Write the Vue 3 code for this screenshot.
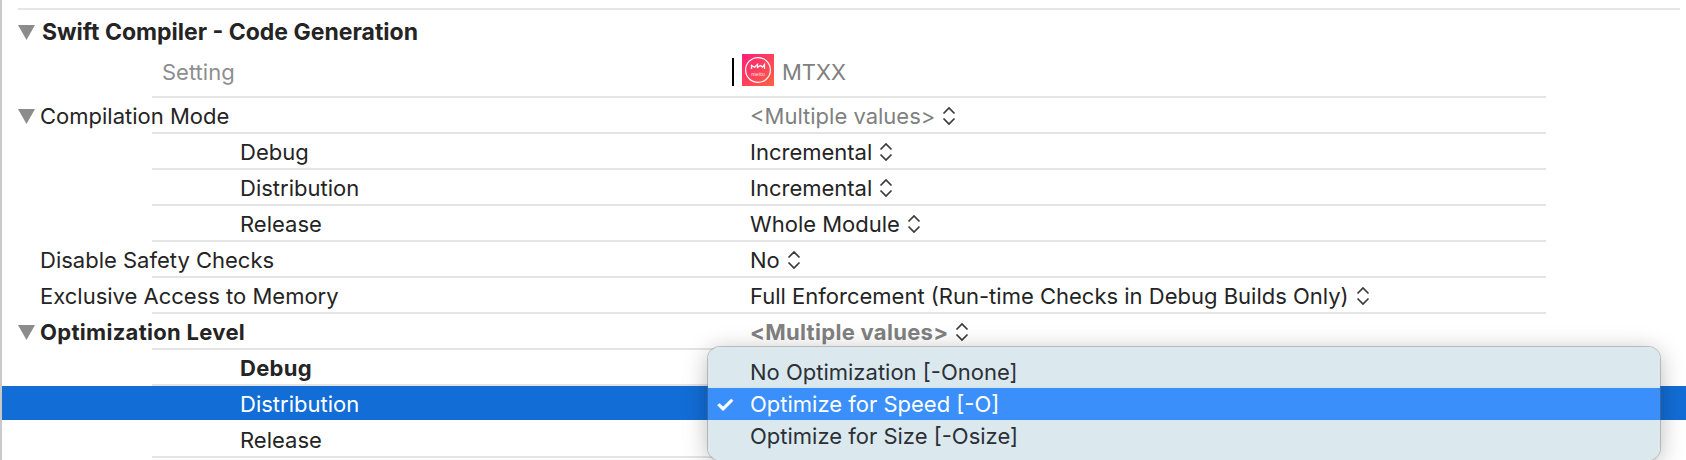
<script setup>
// Xcode build settings table: one section, a header row and the setting rows below it.
const rows = [
  { label: 'Compilation Mode', value: '<Multiple values>', level: 0, open: true, muted: true },
  { label: 'Debug', value: 'Incremental', level: 1 },
  { label: 'Distribution', value: 'Incremental', level: 1 },
  { label: 'Release', value: 'Whole Module', level: 1 },
  { label: 'Disable Safety Checks', value: 'No', level: 0 },
  { label: 'Exclusive Access to Memory', value: 'Full Enforcement (Run-time Checks in Debug Builds Only)', level: 0 },
  { label: 'Optimization Level', value: '<Multiple values>', level: 0, open: true, muted: true, bold: true },
  { label: 'Debug', level: 1, bold: true },
  { label: 'Distribution', level: 1, selected: true },
  { label: 'Release', level: 1 },
]
const options = [
  { label: 'No Optimization [-Onone]' },
  { label: 'Optimize for Speed [-O]', active: true },
  { label: 'Optimize for Size [-Osize]' },
]
</script>

<template>
  <div class="page">
    <div class="section">
      <svg class="tri" width="17" height="15" viewBox="0 0 17 15"><path d="M0 0h17L8.5 15z" /></svg>
      <span class="section-title">Swift Compiler - Code Generation</span>
    </div>

    <div class="row head">
      <span class="label setting">Setting</span>
      <span class="target">
        <span class="cursor"></span>
        <svg class="app-icon" width="32" height="32" viewBox="0 0 32 32">
          <defs>
            <linearGradient id="mt" x1="0" y1="0" x2="1" y2="1">
              <stop offset="0" stop-color="#ff1f7a" />
              <stop offset="1" stop-color="#ff6340" />
            </linearGradient>
          </defs>
          <rect width="32" height="32" fill="url(#mt)" />
          <circle cx="16" cy="16" r="12.4" fill="none" stroke="#fff" stroke-width="1.2" opacity=".95" />
          <path d="M9.5 15v-3.5l3 1.8 3-2.8v2.8l3-1.8 2 1.6 2-2.6V15" fill="none" stroke="#fff" stroke-width="1.3" />
          <text x="16" y="22" text-anchor="middle" class="app-text">meitu</text>
        </svg>
        <span class="target-name">MTXX</span>
      </span>
    </div>

    <div
      v-for="(r, i) in rows"
      :key="i"
      class="row"
      :class="{ selected: r.selected, strong: r.bold }"
    >
      <span class="label" :class="r.level ? 'child' : 'top'">
        <svg v-if="r.open" class="tri" width="17" height="15" viewBox="0 0 17 15"><path d="M0 0h17L8.5 15z" /></svg>
        {{ r.label }}
      </span>
      <span v-if="r.value" class="value" :class="{ muted: r.muted }">
        <span>{{ r.value }}</span>
        <svg class="updown" width="14" height="20" viewBox="0 0 14 20">
          <path d="M1.5 7.5 7 2l5.5 5.5M1.5 12.5 7 18l5.5-5.5" fill="none" stroke="#3a3a3a" stroke-width="1.7" />
        </svg>
      </span>
    </div>

    <div class="popup">
      <div v-for="o in options" :key="o.label" class="option" :class="{ active: o.active }">
        <span class="tick">{{ o.active ? '✓' : '' }}</span>
        {{ o.label }}
      </div>
    </div>
  </div>
</template>

<style scoped>
.page {
  position: relative;
  width: 1684px;
  height: 452px;
  overflow: hidden;
  border-left: 2px solid #c9c9c9;
  padding-top: 8px;
  background: #fff;
  color: #242424;
  font-family: Inter, "Noto Sans", sans-serif;
  font-size: 22px;
}
.section {
  height: 44px;
  margin: 0 6px 0 16px;
  border-top: 2px solid #e6e6e6;
  display: flex;
  align-items: center;
  gap: 7px;
}
.section-title { font-weight: 700; font-size: 23px; }
.tri { fill: #8c8c8c; flex: none; }
.row {
  height: 36px;
  display: flex;
  align-items: center;
  background-image: linear-gradient(#e4e4e4, #e4e4e4);
  background-repeat: no-repeat;
  background-position: 150px bottom;
  background-size: 1394px 2px;
}
.row.head { height: 44px; box-sizing: border-box; padding-bottom: 12px; }
.label { box-sizing: border-box; width: 748px; flex: none; display: flex; align-items: center; }
.label.top { padding-left: 38px; }
.label.top .tri { margin-left: -22px; margin-right: 5px; }
.label.child { padding-left: 238px; }
.label.setting { padding: 3px 0 0 160px; color: #8e8e8e; }
.strong .label, .strong .value { font-weight: 700; letter-spacing: 0.3px; }
.value { display: flex; align-items: center; gap: 7px; white-space: nowrap; }
.muted { color: #808080; }
.target { display: flex; align-items: center; margin-left: -18px; }
.cursor { width: 2px; height: 28px; margin: 4px 8px 0 0; background: #000; }
.target-name { color: #808080; margin: 3px 0 0 8px; }
.app-text { fill: #fff; font-size: 5.5px; font-family: "Liberation Sans", sans-serif; opacity: .85; }
.selected {
  color: #fff;
  background-image: linear-gradient(#136dd6, #136dd6);
  background-position: left top;
  background-size: 100% 34px;
}
.popup {
  position: absolute;
  left: 706px;
  top: 347px;
  width: 952px;
  height: 113px;
  box-sizing: border-box;
  padding-top: 9px;
  border-radius: 12px;
  background: rgba(218, 233, 239, 0.98);
  box-shadow: 0 0 0 1px rgba(120, 120, 120, 0.4), 0 4px 24px rgba(0, 0, 0, 0.28);
}
.option { height: 32px; display: flex; align-items: center; color: #2b3036; }
.option.active { background: #3a8ffb; color: #fff; }
.tick { width: 42px; box-sizing: border-box; padding-left: 7px; font-weight: 700; font-size: 22px; }
</style>

<style>
body { background: #fff; }
</style>
